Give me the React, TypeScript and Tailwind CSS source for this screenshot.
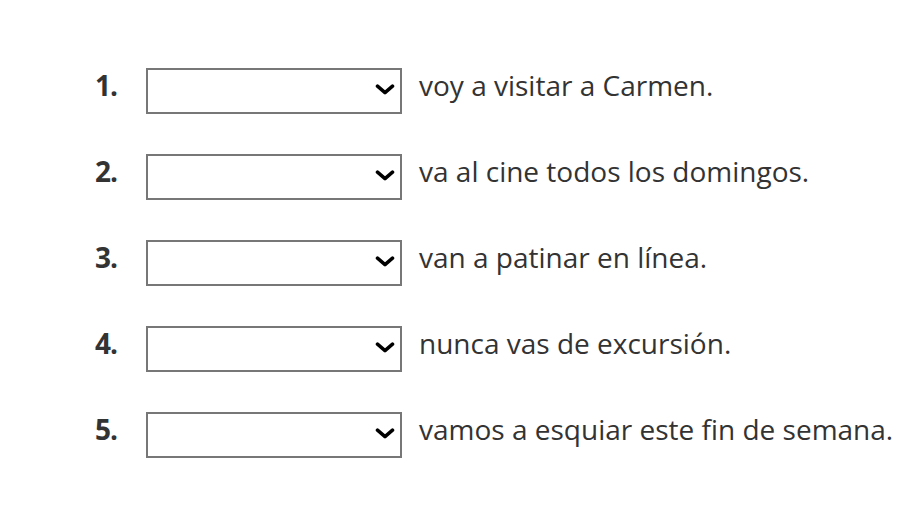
import React from "react";

const items = [
  "voy a visitar a Carmen.",
  "va al cine todos los domingos.",
  "van a patinar en línea.",
  "nunca vas de excursión.",
  "vamos a esquiar este fin de semana.",
];

function Chevron() {
  return (
    <svg width="20" height="12" viewBox="0 0 20 12" className="absolute right-[5px] top-[14px]">
      <path d="M2.5 2.2 L10 8.6 L17.5 2.2" fill="none" stroke="#000" strokeWidth="3.5" strokeLinecap="round" strokeLinejoin="round" />
    </svg>
  );
}

export default function App() {
  return (
    <div
      className="w-[916px] h-[506px] bg-white text-[#333] pt-[68px] pl-[95px]"
      style={{ fontFamily: '"Open Sans", sans-serif' }}
    >
      <div className="flex flex-col gap-[40px]">
        {items.map((t, i) => (
          <div key={i} className="flex items-start h-[46px]">
            <div className="w-[51px] mt-[3px] text-[28px] font-bold leading-[28px] tracking-[-1px]">{i + 1}.</div>
            <div className="relative w-[256px] h-[46px] border-2 border-[#777] bg-white">
              <Chevron />
            </div>
            <div className="ml-[17px] mt-[3px] text-[28px] leading-[28px] whitespace-nowrap">{t}</div>
          </div>
        ))}
      </div>
    </div>
  );
}
